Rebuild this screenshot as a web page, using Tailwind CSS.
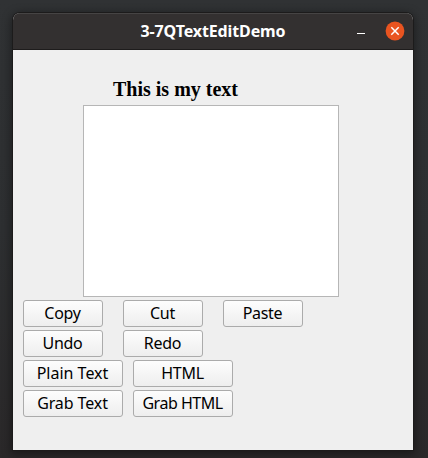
<!DOCTYPE html>
<html lang="en">
<head>
<meta charset="utf-8">
<title>3-7QTextEditDemo</title>
<script src="https://cdn.jsdelivr.net/npm/@tailwindcss/browser@4"></script>
</head>
<body class="h-[458px] w-[428px] overflow-hidden bg-linear-to-b from-[#303234] via-[#2d2f31] to-[#2a2829] px-[13px] pt-[13px]">
<main class="flex h-[437px] w-[400px] flex-col overflow-hidden rounded-t-[7px] bg-[#efefef] shadow-[0_0_0_1px_#1c1b1b,0_2px_10px_2px_rgba(0,0,0,0.4)]">
  <header class="grid h-[37px] shrink-0 grid-cols-[70px_1fr_70px] items-center border-t border-b border-t-[#464444] border-b-[#1e1c1c] bg-[#333030]">
    <span></span>
    <h1 class="pb-[2px] text-center font-['Noto_Sans',sans-serif] text-[16px] leading-none font-bold tracking-[-0.12px] whitespace-nowrap text-white">3-7QTextEditDemo</h1>
    <div class="flex items-center justify-end gap-[19px] pr-2 pb-px">
      <svg class="h-[20px] w-[10px]" viewBox="0 0 10 20"><path d="M1 12.5h8" stroke="white"/></svg>
      <svg class="size-[20px]" viewBox="0 0 20 20"><circle cx="10" cy="10" r="9.4" fill="#e95420"/><path d="m6.3 6.3 7.4 7.4m0-7.4-7.4 7.4" stroke="white" stroke-width="1.5"/></svg>
    </div>
  </header>
  <section class="px-[10px] pt-[27px]">
    <h2 class="h-[28px] pl-[90px] font-['Liberation_Serif',serif] text-[20px] leading-[25px] font-bold text-black">This is my text</h2>
    <div class="ml-[60px] h-[192px] w-[256px] border border-[#b6b6b6] bg-white"></div>
    <div class="mt-[3px] flex flex-col gap-[3px] font-['Noto_Sans',sans-serif] text-[16px] leading-[25px] tracking-[-0.3px] whitespace-nowrap text-black">
      <div class="flex gap-5">
        <button class="h-[27px] w-[80px] rounded-[3px] border border-[#ababab] bg-linear-to-b from-[#fdfdfd] to-[#eeeeee] pr-px">Copy</button>
        <button class="h-[27px] w-[80px] rounded-[3px] border border-[#ababab] bg-linear-to-b from-[#fdfdfd] to-[#eeeeee] pr-px">Cut</button>
        <button class="h-[27px] w-[80px] rounded-[3px] border border-[#ababab] bg-linear-to-b from-[#fdfdfd] to-[#eeeeee] pr-px">Paste</button>
      </div>
      <div class="flex gap-5">
        <button class="h-[27px] w-[80px] rounded-[3px] border border-[#ababab] bg-linear-to-b from-[#fdfdfd] to-[#eeeeee] pr-px">Undo</button>
        <button class="h-[27px] w-[80px] rounded-[3px] border border-[#ababab] bg-linear-to-b from-[#fdfdfd] to-[#eeeeee] pr-px">Redo</button>
      </div>
      <div class="flex gap-[10px]">
        <button class="h-[27px] w-[100px] rounded-[3px] border border-[#ababab] bg-linear-to-b from-[#fdfdfd] to-[#eeeeee] pr-px tracking-normal">Plain Text</button>
        <button class="h-[27px] w-[100px] rounded-[3px] border border-[#ababab] bg-linear-to-b from-[#fdfdfd] to-[#eeeeee] pr-px">HTML</button>
      </div>
      <div class="flex gap-[10px]">
        <button class="h-[27px] w-[100px] rounded-[3px] border border-[#ababab] bg-linear-to-b from-[#fdfdfd] to-[#eeeeee] pr-px tracking-[-0.1px]">Grab Text</button>
        <button class="h-[27px] w-[100px] rounded-[3px] border border-[#ababab] bg-linear-to-b from-[#fdfdfd] to-[#eeeeee] pr-px tracking-[-0.5px]">Grab HTML</button>
      </div>
    </div>
  </section>
</main>
</body>
</html>
